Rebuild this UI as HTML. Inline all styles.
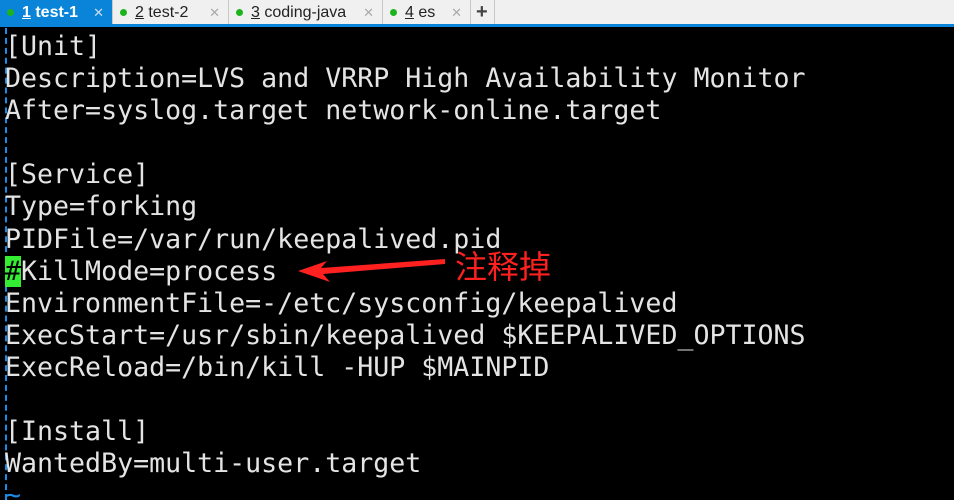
<!DOCTYPE html><html><head><style>
html,body{margin:0;width:954px;height:500px;overflow:hidden}
body{background:#000;position:relative;font-family:"Liberation Sans","DejaVu Sans",sans-serif}
.bar{position:absolute;left:0;top:0;width:954px;height:24px;background:#f0f0f0;border-bottom:3px solid #0a84d8}
.tab{position:absolute;top:0;height:24px;font-size:16px;line-height:25px;color:#222;border-right:1px solid #c8c8c8;box-sizing:border-box;padding-left:22px}
.d:before{content:"";position:absolute;left:7px;top:9px;width:7px;height:7px;border-radius:50%;background:#1db31d}
.tab .x{position:absolute;right:8px;top:0;color:#aaa;font-size:13px}
.a{background:#0a84d8;color:#fff;font-weight:bold}.a .x{color:#cde}
pre{position:absolute;left:5px;top:31px;margin:0;font-family:"DejaVu Sans Mono",monospace;font-size:26.6px;line-height:32.1px;color:#e4e4e4}
.c{position:absolute;left:5px;top:28px;width:0;height:472px;border-left:2px dashed #1b8ce8}
.hl{background:#33ee33;color:#000}
</style></head><body>
<div class="bar">
<div class="tab a d" style="left:0;width:113px"><u>1</u> test-1<span class="x">✕</span></div>
<div class="tab d" style="left:113px;width:116px"><u>2</u> test-2<span class="x">✕</span></div>
<div class="tab d" style="left:229px;width:154px"><u>3</u> coding-java<span class="x">✕</span></div>
<div class="tab d" style="left:383px;width:88px"><u>4</u> es<span class="x">✕</span></div>
<div class="tab" style="left:471px;width:24px;padding-left:5px;font-size:20px;font-weight:bold;color:#444">+</div>
</div>
<div class="c"></div>
<pre>[Unit]
Description=LVS and VRRP High Availability Monitor
After=syslog.target network-online.target

[Service]
Type=forking
PIDFile=/var/run/keepalived.pid
<span class="hl">#</span>KillMode=process
EnvironmentFile=-/etc/sysconfig/keepalived
ExecStart=/usr/sbin/keepalived $KEEPALIVED_OPTIONS
ExecReload=/bin/kill -HUP $MAINPID

[Install]
WantedBy=multi-user.target
<span style="color:#1b8ce8">~</span></pre>
<svg style="position:absolute;left:290px;top:255px" width="170" height="30"><path d="M8 16 L37 6 L31 13 L155 4 L155 9 L33 19 L40 27 Z" fill="#ff2020"/></svg>
<div style="position:absolute;left:455px;top:246px;font-family:'Noto Sans CJK SC',sans-serif;font-size:32px;color:#ff2020;line-height:38px">注释掉</div>
</body></html>
